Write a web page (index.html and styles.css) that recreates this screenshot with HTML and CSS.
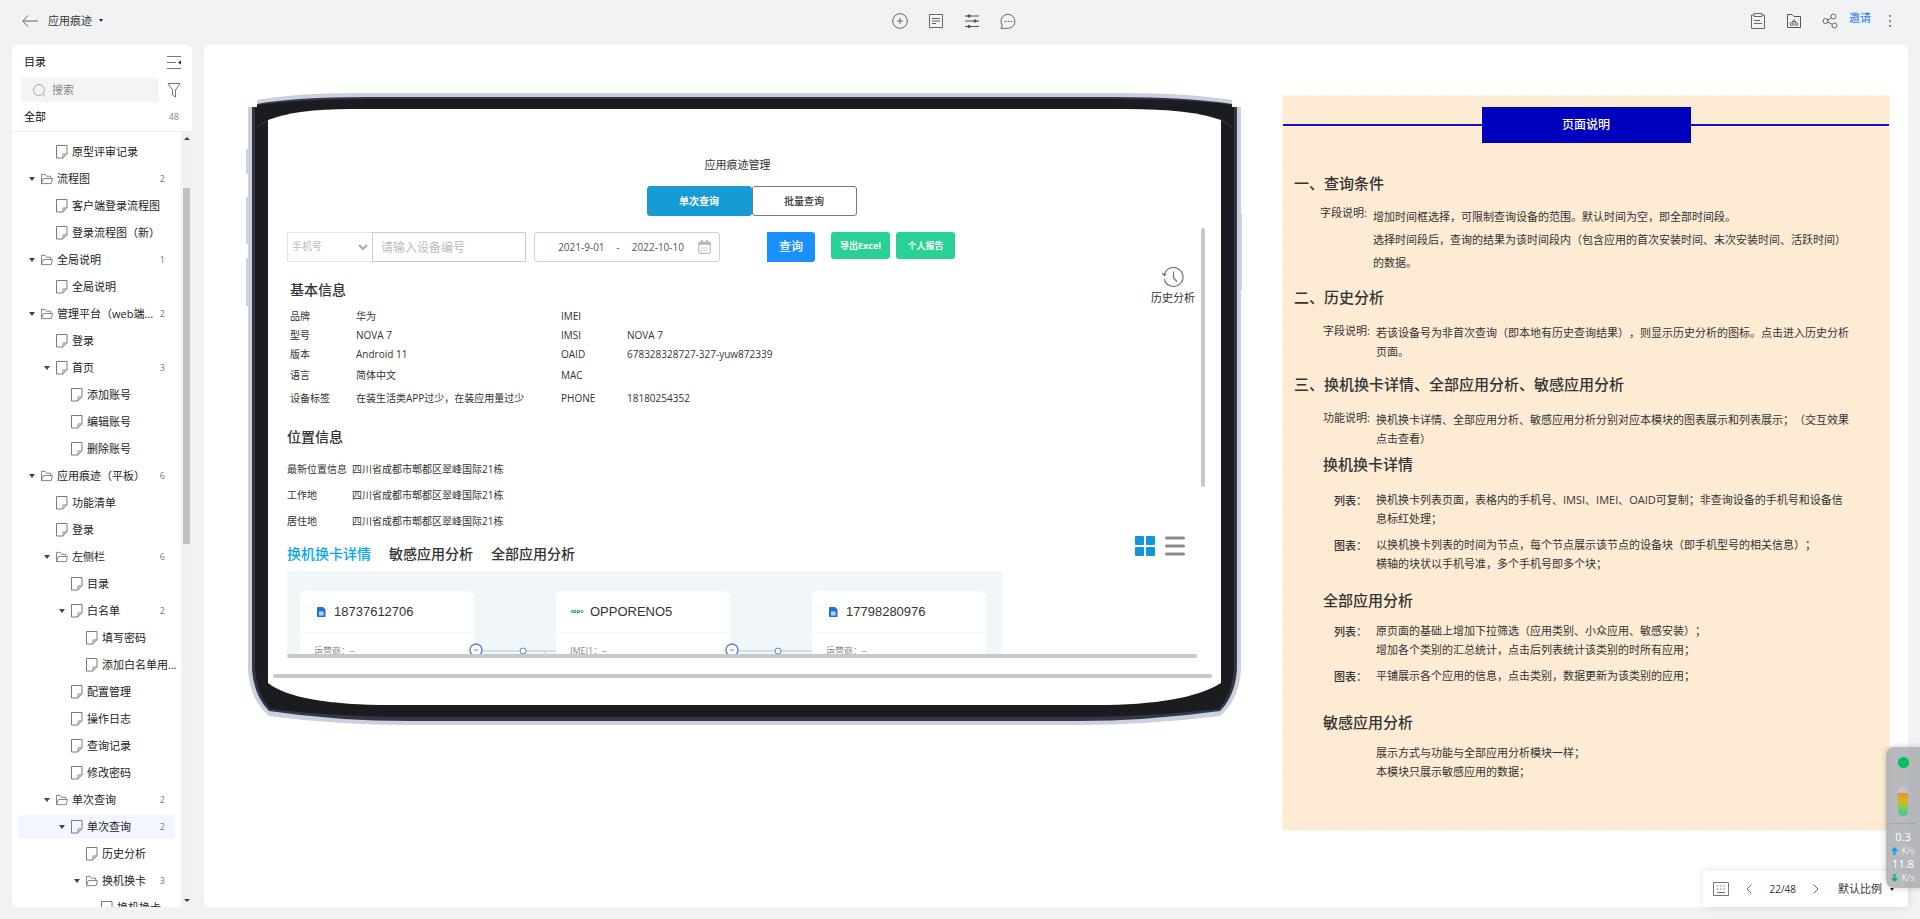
FILE: index.html
```html
<!DOCTYPE html>
<html lang="zh-CN">
<head>
<meta charset="utf-8">
<title>应用痕迹</title>
<link rel="stylesheet" href="styles.css">
</head>
<body>
<svg class="defs" aria-hidden="true">
  <symbol id="page" viewBox="0 0 12 14"><path d="M.5.5h10.500v8.500l-4 4H.5zM11 9H7v4" fill="none" stroke="#7a7a7a"/><path d="M7 9h4l-4 4z" fill="#bbb"/></symbol>
  <symbol id="folder" viewBox="0 0 13 13"><path d="M.5 11.500V1.500h4l1.500 2h4.500v2M.5 11.500l2-5.500h10l-1.500 5.500z" fill="none" stroke="#7a7a7a"/></symbol>
</svg>

<header class="topbar">
  <div class="top-left">
    <button class="icon-btn" aria-label="返回"><svg width="16" height="12" viewBox="0 0 16 12"><path d="M6 .5L.8 6 6 11.500M1 6h15" fill="none" stroke="#666"/></svg></button>
    <button class="doc-title">应用痕迹 <span class="dot-caret"></span></button>
  </div>
  <nav class="top-center">
    <button class="icon-btn" aria-label="添加"><svg width="16" height="16" viewBox="0 0 16 16" fill="none" stroke="#666"><circle cx="8" cy="8" r="7.300"/><path d="M5 8h6M8 5v6"/></svg></button>
    <button class="icon-btn" aria-label="备注"><svg width="16" height="16" viewBox="0 0 16 16" fill="none" stroke="#666"><path d="M1.500 1.500h13v13h-13zM4 5.500h8M4 8h8M4 10.500h4"/></svg></button>
    <button class="icon-btn" aria-label="设置"><svg width="16" height="16" viewBox="0 0 16 16" fill="#555" stroke="#555"><path d="M1 3h14M1 8h14M1 13.500h14"/><circle cx="5" cy="3" r="1.200"/><circle cx="11" cy="8" r="1.200"/><circle cx="5" cy="13.500" r="1.200"/></svg></button>
    <button class="icon-btn" aria-label="评论"><svg width="16" height="16" viewBox="0 0 16 16" fill="none" stroke="#666"><path d="M1 15.300l1.200-3A7 7 0 1 1 8.500 15.300z"/><path d="M4.500 8.500h2M7.700 8.500h1.800M10.700 8.500h1.600"/></svg></button>
  </nav>
  <div class="top-right">
    <button class="icon-btn" aria-label="清单"><svg width="16" height="18" viewBox="0 0 16 18" fill="none" stroke="#666"><path d="M4 3H1.500v13.500h13V3H12M4 1.500h8v3H4zM4 8.500h6M4 11.500h8"/></svg></button>
    <button class="icon-btn" aria-label="素材"><svg width="16" height="16" viewBox="0 0 16 16" fill="none" stroke="#555"><path d="M1.500 14.500v-13H6l2 2h6.500v11zM8 6v3M6 8.500h4"/><circle cx="5.700" cy="11" r="1.500"/><circle cx="10.300" cy="11" r="1.500"/></svg></button>
    <button class="icon-btn" aria-label="分享"><svg width="16" height="16" viewBox="0 0 16 16" fill="none" stroke="#666"><circle cx="3.500" cy="8" r="2.500"/><circle cx="11.500" cy="3.500" r="2.500"/><circle cx="12.500" cy="12.500" r="2.500"/><path d="M5.700 7l3.600-2.300M5.800 9l4.300 2.300"/></svg></button>
    <a class="invite" href="#">邀请</a>
    <button class="more" aria-label="更多"><i></i><i></i><i></i></button>
  </div>
</header>

<div class="workspace">
  <aside class="sidebar">
    <div class="side-head">
      <h2>目录</h2>
      <button class="icon-btn" aria-label="收起目录"><svg width="15" height="14" viewBox="0 0 15 14"><path d="M0 1.500h14M0 7.500h9M0 13.500h14" stroke="#777" fill="none"/><path d="M14 5.500v4l-3-2z" fill="#222"/></svg></button>
    </div>
    <div class="side-search">
      <label class="search-box"><svg width="13" height="13" viewBox="0 0 13 13" fill="none" stroke="#aaa"><circle cx="6" cy="6" r="5.500"/><path d="M10 10l2.700 2.700"/></svg><input type="text" placeholder="搜索" aria-label="搜索"></label>
      <button class="icon-btn" aria-label="筛选"><svg width="14" height="16" viewBox="0 0 14 16"><path d="M1 1.500h12L8.500 8v7l-3-2V8z" fill="none" stroke="#777"/></svg></button>
    </div>
    <div class="side-all"><span>全部</span><span class="count">48</span></div>
    <div class="tree-wrap">
      <ul class="tree">
        <li><a class="row lv2" href="#"><i></i><svg><use href="#page"/></svg><span>原型评审记录</span></a></li>
        <li><a class="row lv1" href="#"><i class="open"></i><svg><use href="#folder"/></svg><span>流程图</span><b>2</b></a></li>
        <li><a class="row lv2" href="#"><i></i><svg><use href="#page"/></svg><span>客户端登录流程图</span></a></li>
        <li><a class="row lv2" href="#"><i></i><svg><use href="#page"/></svg><span>登录流程图（新）</span></a></li>
        <li><a class="row lv1" href="#"><i class="open"></i><svg><use href="#folder"/></svg><span>全局说明</span><b>1</b></a></li>
        <li><a class="row lv2" href="#"><i></i><svg><use href="#page"/></svg><span>全局说明</span></a></li>
        <li><a class="row lv1" href="#"><i class="open"></i><svg><use href="#folder"/></svg><span>管理平台（web端...</span><b>2</b></a></li>
        <li><a class="row lv2" href="#"><i></i><svg><use href="#page"/></svg><span>登录</span></a></li>
        <li><a class="row lv2" href="#"><i class="open"></i><svg><use href="#page"/></svg><span>首页</span><b>3</b></a></li>
        <li><a class="row lv3" href="#"><i></i><svg><use href="#page"/></svg><span>添加账号</span></a></li>
        <li><a class="row lv3" href="#"><i></i><svg><use href="#page"/></svg><span>编辑账号</span></a></li>
        <li><a class="row lv3" href="#"><i></i><svg><use href="#page"/></svg><span>删除账号</span></a></li>
        <li><a class="row lv1" href="#"><i class="open"></i><svg><use href="#folder"/></svg><span>应用痕迹（平板）</span><b>6</b></a></li>
        <li><a class="row lv2" href="#"><i></i><svg><use href="#page"/></svg><span>功能清单</span></a></li>
        <li><a class="row lv2" href="#"><i></i><svg><use href="#page"/></svg><span>登录</span></a></li>
        <li><a class="row lv2" href="#"><i class="open"></i><svg><use href="#folder"/></svg><span>左侧栏</span><b>6</b></a></li>
        <li><a class="row lv3" href="#"><i></i><svg><use href="#page"/></svg><span>目录</span></a></li>
        <li><a class="row lv3" href="#"><i class="open"></i><svg><use href="#page"/></svg><span>白名单</span><b>2</b></a></li>
        <li><a class="row lv4" href="#"><i></i><svg><use href="#page"/></svg><span>填写密码</span></a></li>
        <li><a class="row lv4" href="#"><i></i><svg><use href="#page"/></svg><span>添加白名单用...</span></a></li>
        <li><a class="row lv3" href="#"><i></i><svg><use href="#page"/></svg><span>配置管理</span></a></li>
        <li><a class="row lv3" href="#"><i></i><svg><use href="#page"/></svg><span>操作日志</span></a></li>
        <li><a class="row lv3" href="#"><i></i><svg><use href="#page"/></svg><span>查询记录</span></a></li>
        <li><a class="row lv3" href="#"><i></i><svg><use href="#page"/></svg><span>修改密码</span></a></li>
        <li><a class="row lv2" href="#"><i class="open"></i><svg><use href="#folder"/></svg><span>单次查询</span><b>2</b></a></li>
        <li><a class="row lv3 active" href="#"><i class="open"></i><svg><use href="#page"/></svg><span>单次查询</span><b>2</b></a></li>
        <li><a class="row lv4" href="#"><i></i><svg><use href="#page"/></svg><span>历史分析</span></a></li>
        <li><a class="row lv4" href="#"><i class="open"></i><svg><use href="#folder"/></svg><span>换机换卡</span><b>3</b></a></li>
        <li><a class="row lv5" href="#"><i></i><svg><use href="#page"/></svg><span>换机换卡</span></a></li>
      </ul>
      <div class="scrollbar"><span class="arrow up"></span><span class="track"><span class="thumb"></span></span><span class="arrow down"></span></div>
    </div>
  </aside>

  <main class="canvas">
    <section class="device">
      <svg class="device-frame" viewBox="0 0 996 632" preserveAspectRatio="none" aria-hidden="true">
        <path d="M0 56h3v25H0zM0 104h3v47H0zM0 165h3v48H0zM994 120h2v77h-2z" fill="#ccd3e4"/>
        <path d="M2 14H11V7Q50 0 110 0H880Q940 0 986 7V14H995V577Q993 607 974 623Q900 632 830 632H166Q90 632 23 623Q4 607 2 577Z" fill="#cad0de"/>
        <path d="M6 14H11V11Q50 4 120 4H870Q940 4 986 11V14H991V577Q989 603 974 618Q900 628 830 628H166Q90 628 23 618Q8 603 6 577Z" fill="#343745"/>
        <path d="M9 14H11V12Q60 6 120 6H870Q940 6 986 12V14H988V577Q986 601 973 616Q900 624 830 624H166Q90 624 24 616Q11 601 9 577Z" fill="#1b1c20"/>
        <path d="M22 27Q50 16 105 16H880Q945 16 975 27V590Q940 612 850 612H146Q50 612 22 590Z" fill="#fff"/>
        <path d="M11 34L22 27M986 34L975 27" stroke="#3c3f49" fill="none"/>
      </svg>
      <div class="screen">
        <h1>应用痕迹管理</h1>
        <div class="mode-tabs"><button class="on">单次查询</button><button>批量查询</button></div>
        <div class="viewport">
          <div class="scroll-body">
            <form class="query">
              <span class="select-wrap"><select aria-label="查询类型"><option>手机号</option></select><svg width="10" height="7" viewBox="0 0 10 7"><path d="M1 1l4 4 4-4" fill="none" stroke="#aaa" stroke-width="2"/></svg></span>
              <input class="device-no" type="text" placeholder="请输入设备编号" aria-label="设备编号">
              <button type="button" class="dates"><span>2021-9-01</span><span>-</span><span>2022-10-10</span><svg width="13" height="14" viewBox="0 0 13 14"><rect x=".7" y="2" width="11.600" height="11.300" rx="1.500" fill="none" stroke="#bbb" stroke-width="1.200"/><path d="M.7 2h11.600v3H.7zM3 0h2v3H3zM8 0h2v3H8z" fill="#bbb"/><path d="M3 8h7M3 10.500h7" stroke="#bbb" stroke-dasharray="1.500 1"/></svg></button>
              <button type="button" class="go">查询</button>
              <button type="button" class="green">导出Excel</button>
              <button type="button" class="green">个人报告</button>
            </form>
            <div class="basic">
              <div>
                <h2>基本信息</h2>
                <table>
                  <tr><th>品牌</th><td>华为</td><th>IMEI</th><td></td></tr>
                  <tr><th>型号</th><td>NOVA 7</td><th>IMSI</th><td>NOVA 7</td></tr>
                  <tr><th>版本</th><td>Android 11</td><th>OAID</th><td>678328328727-327-yuw872339</td></tr>
                  <tr class="tall"><th>语言</th><td>简体中文</td><th>MAC</th><td></td></tr>
                  <tr class="tall"><th>设备标签</th><td>在装生活类APP过少，在装应用量过少</td><th>PHONE</th><td>18180254352</td></tr>
                </table>
              </div>
              <button class="history"><svg width="22" height="22" viewBox="0 0 22 22" fill="none" stroke="#777"><path d="M2.200 9A9.500 9.500 0 1 1 2.200 13M0 7l2.200 2.500L4.500 8M11.500 5.500V12l3.500 3.500" stroke-width="1.200"/></svg>历史分析</button>
            </div>
            <div class="place">
              <h2>位置信息</h2>
              <table>
                <tr><th>最新位置信息</th><td>四川省成都市郫都区翠峰国际21栋</td></tr>
                <tr><th>工作地</th><td>四川省成都市郫都区翠峰国际21栋</td></tr>
                <tr><th>居住地</th><td>四川省成都市郫都区翠峰国际21栋</td></tr>
              </table>
            </div>
            <div class="analysis">
              <a class="on" href="#">换机换卡详情</a><a href="#">敏感应用分析</a><a href="#">全部应用分析</a>
              <div class="views">
                <button class="icon-btn" aria-label="图表"><svg width="20" height="20" viewBox="0 0 20 20" fill="#1296db"><rect width="9" height="9" rx="1"/><rect x="11" width="9" height="9" rx="1"/><rect y="11" width="9" height="9" rx="1"/><rect x="11" y="11" width="9" height="9" rx="1"/></svg></button>
                <button class="icon-btn" aria-label="列表"><svg width="20" height="20" viewBox="0 0 20 20"><path d="M1.500 2h17M1.500 10h17M1.500 18h17" stroke="#8a8a8a" stroke-width="3" stroke-linecap="round"/></svg></button>
              </div>
            </div>
            <div class="chart">
              <article class="card"><h3><svg width="14" height="14" viewBox="0 0 14 14"><path d="M3 2h6l2.500 2.500V12H3z" fill="#2470d8"/><path d="M5 6.500h4.500v4H5z" fill="#bcd5f7"/></svg>18737612706</h3><p>运营商：–</p></article>
              <svg class="link" viewBox="0 0 82 20"><path d="M2 11h80M71 11v8" stroke="#b9c7d8" fill="none"/><circle cx="2" cy="10" r="6" fill="#fff" stroke="#5b83e6" stroke-width="1.500"/><path d="M0 10h4" stroke="#5b83e6"/><circle cx="49" cy="11" r="3" fill="#fff" stroke="#5b83e6"/></svg>
              <article class="card"><h3><svg width="14" height="14" viewBox="0 0 14 14" fill="none" stroke="#3a9f68"><circle cx="2" cy="6.500" r="1"/><path d="M4 8.500V5.500h2v2H4M7.500 8.500V5.500h2v2h-2"/><circle cx="12" cy="6.500" r="1"/></svg>OPPORENO5</h3><p>IMEI1：–</p></article>
              <svg class="link" viewBox="0 0 82 20"><path d="M2 11h80" stroke="#b9c7d8" fill="none"/><circle cx="2" cy="10" r="6" fill="#fff" stroke="#5b83e6" stroke-width="1.500"/><path d="M0 10h4" stroke="#5b83e6"/><circle cx="48" cy="11" r="3" fill="#fff" stroke="#5b83e6"/></svg>
              <article class="card"><h3><svg width="14" height="14" viewBox="0 0 14 14"><path d="M3 2h6l2.500 2.500V12H3z" fill="#2470d8"/><path d="M5 6.500h4.500v4H5z" fill="#bcd5f7"/></svg>17798280976</h3><p>运营商：–</p></article>
            </div>
            <div class="h-bar"></div>
          </div>
          <div class="v-bar"></div>
        </div>
        <div class="h-bar outer"></div>
      </div>
    </section>

    <section class="notes">
      <div class="notes-title"><span>页面说明</span></div>
      <h2>一、查询条件</h2>
      <dl class="loose"><dt>字段说明:</dt><dd>增加时间框选择，可限制查询设备的范围。默认时间为空，即全部时间段。<br>选择时间段后，查询的结果为该时间段内（包含应用的首次安装时间、末次安装时间、活跃时间）<br>的数据。</dd></dl>
      <h2>二、历史分析</h2>
      <dl><dt>字段说明:</dt><dd>若该设备号为非首次查询（即本地有历史查询结果），则显示历史分析的图标。点击进入历史分析<br>页面。</dd></dl>
      <h2>三、换机换卡详情、全部应用分析、敏感应用分析</h2>
      <dl><dt>功能说明:</dt><dd>换机换卡详情、全部应用分析、敏感应用分析分别对应本模块的图表展示和列表展示；（交互效果<br>点击查看）</dd></dl>
      <h3>换机换卡详情</h3>
      <dl><dt class="sub">列表：</dt><dd>换机换卡列表页面，表格内的手机号、IMSI、IMEI、OAID可复制；非查询设备的手机号和设备信<br>息标红处理；</dd>
      <dt class="sub">图表：</dt><dd>以换机换卡列表的时间为节点，每个节点展示该节点的设备块（即手机型号的相关信息）；<br>横轴的块状以手机号准，多个手机号即多个块；</dd></dl>
      <h3 class="wide">全部应用分析</h3>
      <dl class="tight"><dt class="sub">列表：</dt><dd>原页面的基础上增加下拉筛选（应用类别、小众应用、敏感安装）；<br>增加各个类别的汇总统计，点击后列表统计该类别的时所有应用；</dd>
      <dt class="sub">图表：</dt><dd>平铺展示各个应用的信息，点击类别，数据更新为该类别的应用；</dd></dl>
      <h3 class="wider">敏感应用分析</h3>
      <dl class="tight"><dt></dt><dd>展示方式与功能与全部应用分析模块一样；<br>本模块只展示敏感应用的数据；</dd></dl>
    </section>

    <div class="pager">
      <button class="icon-btn" aria-label="键盘"><svg width="16" height="14" viewBox="0 0 16 14" fill="none" stroke="#777"><path d="M.5.500h15v13H.5z"/><path d="M3.500 4h9M3.500 7h9" stroke-dasharray="1.500 2"/><path d="M4 10.500h8"/></svg></button>
      <button class="icon-btn" aria-label="上一页"><svg width="6" height="10" viewBox="0 0 6 10"><path d="M5.500.5L1 5l4.500 4.500" fill="none" stroke="#666"/></svg></button>
      <span>22/48</span>
      <button class="icon-btn" aria-label="下一页"><svg width="6" height="10" viewBox="0 0 6 10"><path d="M.5.5L5 5 .5 9.500" fill="none" stroke="#666"/></svg></button>
      <button class="zoom">默认比例 <span class="dot-caret"></span></button>
    </div>
  </main>
</div>

<aside class="monitor">
  <span class="status"></span>
  <span class="level"></span>
  <div class="rates">
    <strong>0.3</strong><small><svg width="7" height="8" viewBox="0 0 7 8"><path d="M3.500 0L7 4H4.500v4h-2V4H0z" fill="#0a9cf5"/></svg>K/s</small>
    <strong>11.8</strong><small><svg width="7" height="8" viewBox="0 0 7 8"><path d="M3.500 8L7 4H4.500V0h-2v4H0z" fill="#0cb45c"/></svg>K/s</small>
  </div>
</aside>
</body>
</html>
```
FILE: styles.css
```css
* { box-sizing: border-box; }

body {
  margin: 0;
  height: 100vh;
  display: flex;
  flex-direction: column;
  overflow: hidden;
  position: relative;
  background: #f1f2f4;
  color: #333;
  font: 11px/16px "Open Sans", "Noto Sans CJK SC", sans-serif;
  text-spacing-trim: space-all;
}

h1, h2, h3, p, ul, dl, dd { margin: 0; padding: 0; font-weight: 400; }
ul { list-style: none; }
a { color: inherit; text-decoration: none; }
svg { display: block; flex: none; }
table { border-collapse: collapse; }
th, td { padding: 0; text-align: left; font-weight: 400; }
button, input, select { font: inherit; color: inherit; margin: 0; }
button { padding: 0; border: 0; background: none; }
.defs { position: absolute; width: 0; height: 0; }
.icon-btn { display: flex; align-items: center; justify-content: center; }

/* top bar */
.topbar {
  flex: none;
  display: grid;
  grid-template-columns: 1fr auto 1fr;
  align-items: center;
  height: 45px;
  padding: 0 28px 4px 22px;
}
.top-left { display: flex; align-items: center; gap: 10px; }
.doc-title { display: flex; align-items: center; gap: 7px; }
.dot-caret { border: 2px solid transparent; border-top: 3px solid #222; border-bottom: 0; }
.top-center { display: flex; gap: 20px; margin-right: 6px; }
.top-right { display: flex; align-items: center; justify-content: flex-end; gap: 20px; }
.invite { color: #1677ff; margin-left: -9px; padding-bottom: 6px; }
.more { display: flex; flex-direction: column; gap: 3px; padding: 0 1px; margin-left: -3px; }
.more i { width: 2px; height: 2px; background: #8a8a8a; }

.workspace { flex: 1; min-height: 0; display: flex; gap: 12px; padding: 0 12px 12px; }

/* sidebar */
.sidebar {
  flex: none;
  width: 180px;
  display: flex;
  flex-direction: column;
  overflow: hidden;
  background: #fff;
  border-radius: 6px;
}
.side-head { display: flex; align-items: center; justify-content: space-between; height: 33px; padding: 0 10px 0 12px; color: #111; }
.side-head h2 { font-size: 11px; }
.side-search { display: flex; align-items: center; gap: 8px; padding: 0 11px 0 9px; }
.search-box { flex: 1; min-width: 0; display: flex; align-items: center; gap: 6px; height: 24px; padding-left: 12px; border-radius: 2px; background: #f4f4f4; }
.search-box input { width: 80px; border: 0; outline: 0; padding: 0; background: none; }
.search-box input::placeholder { color: #888; opacity: 1; }
.side-all { display: flex; align-items: center; justify-content: space-between; height: 30px; padding: 0 13px 0 12px; border-bottom: 1px solid #eee; color: #111; }
.count { color: #888; font-size: 9px; }
.tree-wrap { flex: 1; min-height: 0; display: flex; }
.tree { flex: 1; min-width: 0; overflow: hidden; padding: 8px 6px 0; }
.row { display: flex; align-items: center; height: 24px; margin-bottom: 3px; padding-right: 10px; border-radius: 2px; color: #222; white-space: nowrap; }
.row i { flex: none; width: 6px; margin-right: 6px; }
.row i.open { border: 3px solid transparent; border-top: 4px solid #444; border-bottom: 0; }
.row svg { width: 12px; height: 14px; margin-right: 4px; }
.row b { margin-left: auto; font-size: 9px; font-weight: 400; color: #777; }
.lv1 { padding-left: 11px; }
.lv2 { padding-left: 26px; }
.lv3 { padding-left: 41px; }
.lv4 { padding-left: 56px; }
.lv5 { padding-left: 71px; }
.active { background: #f2f7ff; }
.scrollbar { flex: none; width: 11px; display: flex; flex-direction: column; align-items: center; padding: 5px 0; background: #f1f1f1; }
.arrow { border: 3px solid transparent; }
.arrow.up { border-bottom: 3px solid #444; border-top: 0; }
.arrow.down { border-top: 3px solid #444; border-bottom: 0; }
.track { flex: 1; width: 7px; padding-top: 48px; }
.thumb { display: block; height: 50%; background: #c1c1c1; }

/* canvas */
.canvas {
  flex: 1;
  min-width: 0;
  position: relative;
  display: grid;
  grid-template-columns: minmax(0, 996fr) minmax(0, 608fr);
  align-items: start;
  gap: 40px;
  padding: 48px 18px 0 42px;
  background: #fff;
  border-radius: 6px;
}

/* tablet */
.device { position: relative; padding: 63px 30px 47px 27px; }
.device-frame { position: absolute; inset: 0; width: 100%; height: 100%; }
.screen { position: relative; }
.screen h1 { font-size: 11px; line-height: 18px; text-align: center; padding-right: 10px; }
.mode-tabs { display: flex; justify-content: center; padding-left: 18px; margin: 12px 0; }
.mode-tabs button { width: 105px; height: 30px; border: 1px solid #797979; border-radius: 3px; font-size: 10px; font-weight: 500; background: #fff; }
.mode-tabs .on { background: #169bd5; border-color: #169bd5; color: #fff; font-weight: 700; }
.viewport { display: flex; justify-content: space-between; padding: 0 7px 0 14px; }
.scroll-body { flex: 1; min-width: 0; padding-top: 4px; }
.v-bar { flex: none; width: 4px; height: 259px; margin-left: -4px; border-radius: 2px; background: #c9c9c9; }
.h-bar { height: 4px; margin-right: 8px; border-radius: 2px; background: #c9c9c9; }
.h-bar.outer { margin: 16px 0 0; }

.query { display: flex; align-items: flex-start; height: 30px; }
.select-wrap { display: flex; align-items: center; width: 85px; height: 30px; border: 1px solid #e4e4e4; border-right: 0; padding: 0 4px; }
.select-wrap select { flex: 1; min-width: 0; appearance: none; border: 0; outline: 0; background: none; font-size: 10px; color: #bbb; padding: 0 0 2px; }
.device-no { width: 154px; height: 30px; border: 1px solid #ccc; padding: 0 8px; font-size: 12px; }
.device-no::placeholder { color: #bbb; opacity: 1; }
.dates { display: flex; align-items: center; justify-content: flex-end; gap: 12px; width: 186px; height: 30px; margin-left: 8px; padding: 0 8px; border: 1px solid #d0d0d0; border-radius: 3px; font-size: 10px; color: #555; }
.dates svg { margin-left: 2px; }
.go { width: 48px; height: 30px; margin: 0 16px 0 47px; border-radius: 0 3px 3px 0; background: #1890ff; color: #fff; font-size: 12px; font-weight: 500; }
.green { width: 59px; height: 27px; margin-right: 6px; border-radius: 3px; background: #2ad195; color: #fff; font-size: 9px; font-weight: 700; }

.screen h2 { font-size: 14px; line-height: 20px; font-weight: 500; color: #333; }
.basic { display: flex; justify-content: space-between; padding: 18px 8px 0 3px; }
.basic table { margin-top: 6px; font-size: 10px; }
.basic th { width: 66px; }
.basic td { width: 205px; }
.basic td, .basic th { height: 19px; }
.basic .tall td, .basic .tall th { height: 23px; }
.history { align-self: flex-start; display: flex; flex-direction: column; align-items: center; gap: 2px; margin-top: -14px; width: 48px; }
.place { margin-top: 18px; }
.place table { margin-top: 9px; font-size: 10px; }
.place th { width: 65px; height: 26px; }

.analysis { display: flex; gap: 18px; margin-top: 10px; font-size: 14px; line-height: 20px; font-weight: 500; }
.analysis a { color: #333; }
.analysis a.on { color: #02a7f0; }
.views { display: flex; gap: 10px; margin: -8px 20px 0 auto; height: 20px; }
.chart { display: flex; align-items: flex-start; width: 715px; height: 83px; margin-top: 7px; padding: 20px 13px 0; overflow: hidden; background: #f1f6f9; }
.card { flex: none; width: 174px; height: 120px; border-radius: 6px; background: #fff; }
.card h3 { display: flex; align-items: center; gap: 6px; height: 42px; padding-left: 14px; border-bottom: 1px solid #f3f5f7; font: 13px/20px "Liberation Sans", "Noto Sans CJK SC", sans-serif; }
.card p { padding: 10px 14px; font-size: 9px; color: #888; }
.link { width: 82px; height: 20px; margin-top: 49px; overflow: visible; }

/* notes */
.notes { margin-top: 2px; padding: 11px 0 49px; border: 1px dashed #fff6ea; background: #fdebd4; }
.notes-title { display: flex; align-items: center; }
.notes-title::before, .notes-title::after { content: ""; flex: 1; height: 2px; background: #1414b8; }
.notes-title span { width: 209px; line-height: 36px; text-align: center; font-size: 12px; font-weight: 500; color: #fff; background: #0000bf; }
.notes h2 { font-size: 15px; line-height: 20px; font-weight: 500; padding-left: 11px; margin-top: 13px; }
.notes .notes-title + h2 { margin-top: 30px; }
.notes h3 { font-size: 15px; line-height: 20px; font-weight: 500; padding-left: 40px; margin-top: 6px; }
.notes h3.wide { margin-top: 17px; }
.notes h3.wider { margin-top: 27px; }
.notes dl { display: grid; grid-template-columns: 53px 1fr; row-gap: 7px; margin-top: 16px; padding-left: 40px; line-height: 19px; white-space: nowrap; }
.notes dl.tight { margin-top: 11px; }
.notes dl.loose { margin-top: 12px; padding-left: 37px; line-height: 23px; }
.notes dt { line-height: 16px; }
.notes dt.sub { padding: 3px 0 0 11px; font-weight: 500; }

/* pager */
.pager {
  position: absolute;
  right: 0;
  bottom: 0;
  display: flex;
  align-items: center;
  gap: 17px;
  height: 36px;
  padding: 0 14px 0 10px;
  border-radius: 3px;
  background: #fff;
  box-shadow: 0 0 8px rgba(0, 0, 0, .12);
}
.pager > span { font-size: 10px; }
.zoom { display: flex; align-items: center; gap: 8px; margin-left: 2px; }

/* speed monitor */
.monitor {
  position: absolute;
  right: 0;
  bottom: 31px;
  width: 34px;
  display: flex;
  flex-direction: column;
  align-items: center;
  padding-top: 10px;
  border-radius: 8px 0 0 8px;
  background: rgba(166, 168, 173, .8);
  box-shadow: 0 0 6px rgba(0, 0, 0, .2);
  color: #fff;
}
.status { width: 11px; height: 11px; border-radius: 50%; background: #00bf63; }
.level { width: 10px; height: 30px; margin: 18px 0 7px; border-radius: 5px; background: linear-gradient(#c4c5c9 0 7px, #ee8f2b 7px, #d3b821 15px, #6fd05c 23px, #35c3b4 30px); }
.rates { display: flex; flex-direction: column; align-items: center; align-self: stretch; margin: 0 4px; padding: 6px 0 4px; border-top: 1px solid #a4a6aa; }
.rates strong { font-size: 11px; line-height: 14px; font-weight: 400; }
.rates small { display: flex; align-items: center; gap: 3px; font-size: 9px; line-height: 13px; color: #eee; }
```
